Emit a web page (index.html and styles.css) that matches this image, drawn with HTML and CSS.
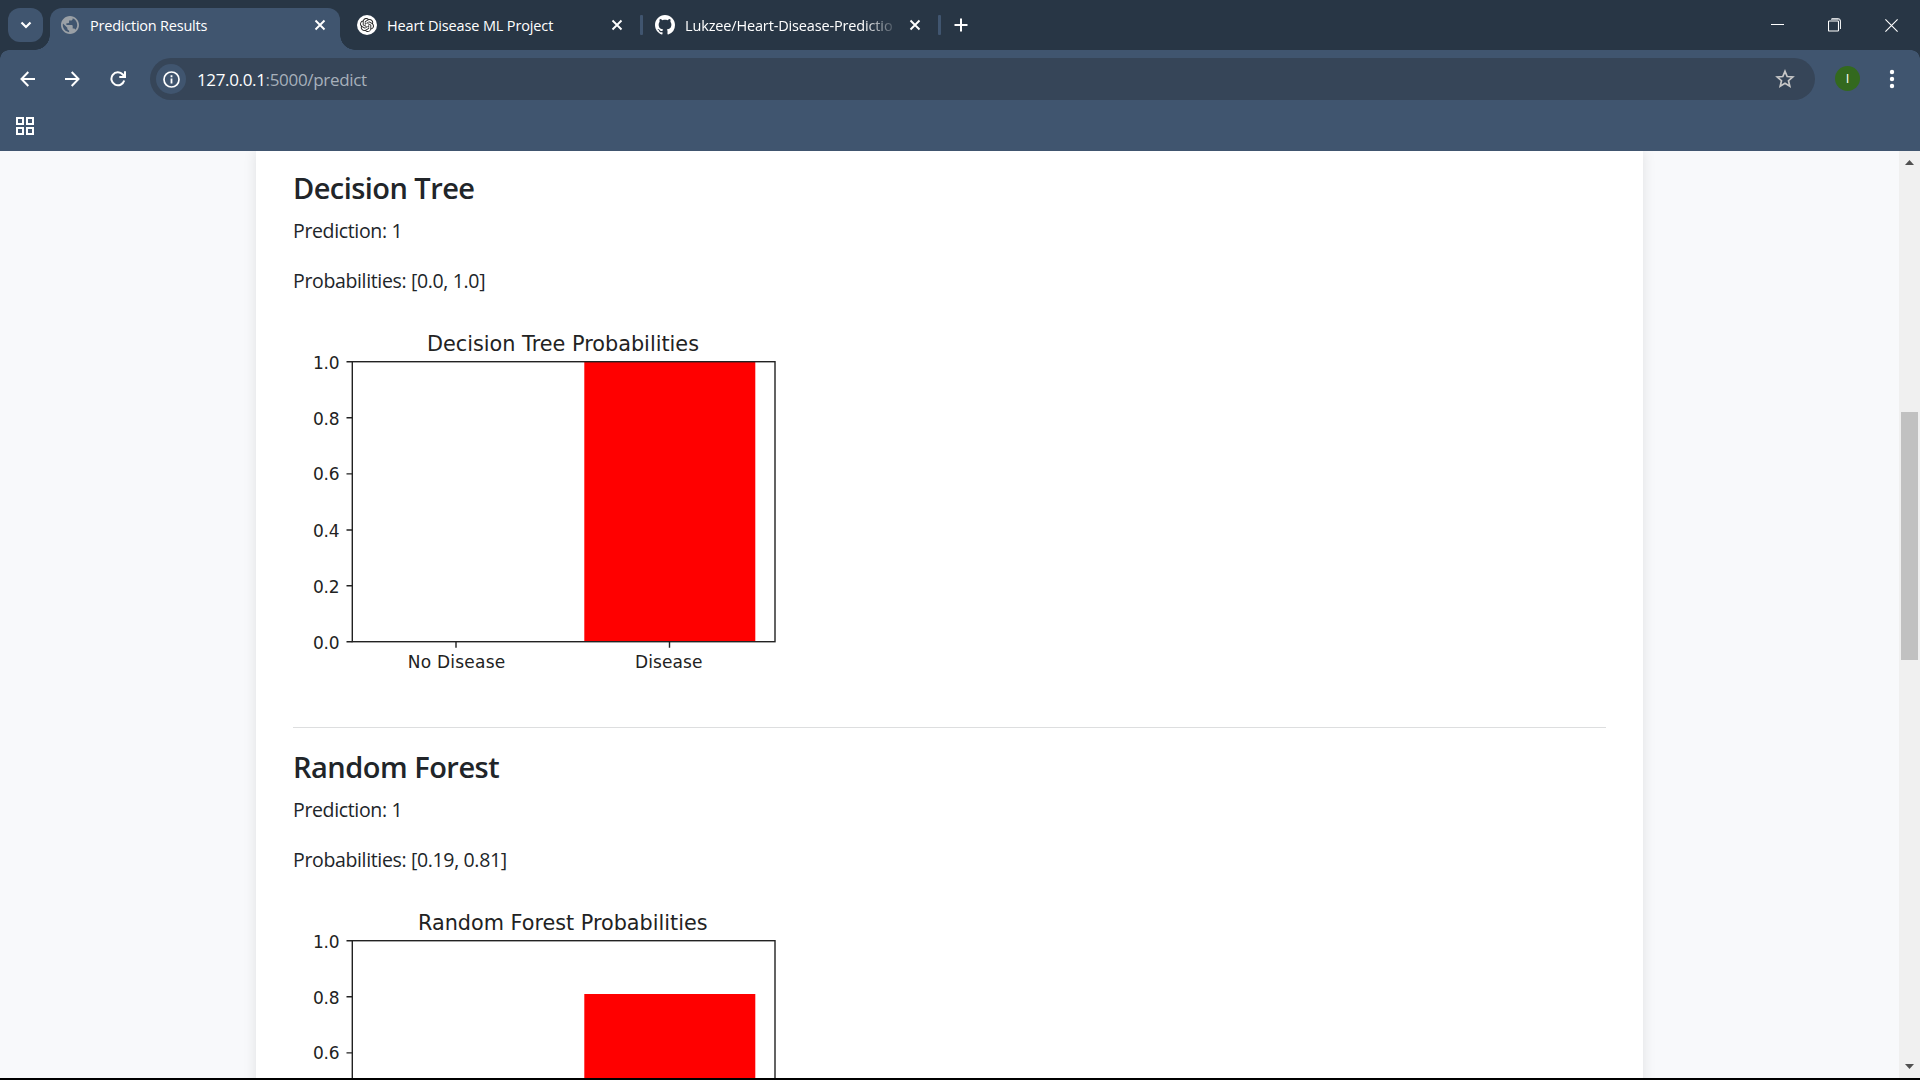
FILE: index.html
```html
<!DOCTYPE html>
<html lang="en">
<head>
<meta charset="utf-8">
<title>Prediction Results</title>
<link rel="stylesheet" href="styles.css">
</head>
<body>
<div class="window">
  <header class="tabstrip">
    <div class="tab-search"><svg width="12" height="8" viewBox="0 0 12 8"><path d="M1.500 1.500 6 6l4.500-4.500" fill="none" stroke="#fff" stroke-width="2.200"/></svg></div>
    <div class="tab active">
      <svg class="globe" viewBox="2 2 20 20"><path fill="#9aa0a6" d="M12 2C6.480 2 2 6.480 2 12s4.480 10 10 10 10-4.480 10-10S17.520 2 12 2zm-1 17.930c-3.950-.490-7-3.850-7-7.930 0-.620.080-1.210.210-1.790L9 15v1c0 1.100.900 2 2 2v1.930zm6.900-2.540c-.260-.810-1-1.390-1.900-1.390h-1v-3c0-.550-.450-1-1-1H8v-2h2c.550 0 1-.450 1-1V7h2c1.100 0 2-.900 2-2v-.410c2.930 1.190 5 4.060 5 7.410 0 2.080-.800 3.970-2.100 5.390z"/></svg>
      <span class="tab-title t1">Prediction Results</span>
      <svg class="close" viewBox="0 0 12 12"><path d="M1.500 1.500l9 9m0-9l-9 9"/></svg>
    </div>
    <div class="tab second">
      <svg class="favicon" viewBox="0 0 20 20"><circle cx="10" cy="10" r="10" fill="#fff"/><g transform="translate(3 3) scale(.583)"><path fill="#222" d="M22.2819 9.8211a5.9847 5.9847 0 0 0-.5157-4.9108 6.0462 6.0462 0 0 0-6.5098-2.9A6.0651 6.0651 0 0 0 4.9807 4.1818a5.9847 5.9847 0 0 0-3.9977 2.9 6.0462 6.0462 0 0 0 .7427 7.0966 5.98 5.98 0 0 0 .511 4.9107 6.051 6.051 0 0 0 6.5146 2.9001A5.9847 5.9847 0 0 0 13.2599 24a6.0557 6.0557 0 0 0 5.7718-4.2058 5.9894 5.9894 0 0 0 3.9977-2.9001 6.0557 6.0557 0 0 0-.7475-7.0729zm-9.022 12.6081a4.4755 4.4755 0 0 1-2.8764-1.0408l.1419-.0804 4.7783-2.7582a.7948.7948 0 0 0 .3927-.6813v-6.7369l2.02 1.1686a.071.071 0 0 1 .038.052v5.5826a4.504 4.504 0 0 1-4.4945 4.4944zm-9.6607-4.1254a4.4708 4.4708 0 0 1-.5346-3.0137l.142.0852 4.783 2.7582a.7712.7712 0 0 0 .7806 0l5.8428-3.3685v2.3324a.0804.0804 0 0 1-.0332.0615L9.74 19.9502a4.4992 4.4992 0 0 1-6.1408-1.6464zM2.3408 7.8956a4.485 4.485 0 0 1 2.3655-1.9728V11.6a.7664.7664 0 0 0 .3879.6765l5.8144 3.3543-2.0201 1.1685a.0757.0757 0 0 1-.071 0l-4.8303-2.7865A4.504 4.504 0 0 1 2.3408 7.872zm16.5963 3.8558L13.1038 8.364 15.1192 7.2a.0757.0757 0 0 1 .071 0l4.8303 2.7913a4.4944 4.4944 0 0 1-.6765 8.1042v-5.6772a.79.79 0 0 0-.407-.667zm2.0107-3.0231l-.142-.0852-4.7735-2.7818a.7759.7759 0 0 0-.7854 0L9.409 9.2297V6.8974a.0662.0662 0 0 1 .0284-.0615l4.8303-2.7866a4.4992 4.4992 0 0 1 6.6802 4.66zM8.3065 12.863l-2.02-1.1638a.0804.0804 0 0 1-.038-.0567V6.0742a4.4992 4.4992 0 0 1 7.3757-3.4537l-.142.0805L8.704 5.459a.7948.7948 0 0 0-.3927.6813zm1.0976-2.3654l2.602-1.4998 2.6069 1.4998v2.9994l-2.5974 1.4997-2.6067-1.4997Z"/></g></svg>
      <span class="tab-title t2">Heart Disease ML Project</span>
      <svg class="close" viewBox="0 0 12 12"><path d="M1.500 1.500l9 9m0-9l-9 9"/></svg>
    </div>
    <i class="separator"></i>
    <div class="tab third">
      <svg class="favicon" viewBox="0 0 16 16"><path fill="#fff" d="M8 0C3.58 0 0 3.58 0 8c0 3.54 2.29 6.53 5.47 7.59.4.07.55-.17.55-.38 0-.19-.01-.82-.01-1.49-2.01.37-2.53-.49-2.69-.94-.09-.23-.48-.94-.82-1.13-.28-.15-.68-.52-.01-.53.63-.01 1.08.58 1.23.82.72 1.21 1.87.87 2.33.66.07-.52.28-.87.51-1.07-1.78-.2-3.64-.89-3.64-3.95 0-.87.31-1.59.82-2.15-.08-.2-.36-1.02.08-2.12 0 0 .67-.21 2.2.82.64-.18 1.32-.27 2-.27s1.36.09 2 .27c1.53-1.04 2.2-.82 2.2-.82.44 1.1.16 1.92.08 2.12.51.56.82 1.27.82 2.15 0 3.07-1.87 3.75-3.65 3.95.29.25.54.73.54 1.48 0 1.07-.01 1.93-.01 2.2 0 .21.15.46.55.38A8.01 8.01 0 0 0 16 8c0-4.42-3.58-8-8-8z"/></svg>
      <span class="tab-title t3">Lukzee/Heart-Disease-Predictio</span>
      <svg class="close" viewBox="0 0 12 12"><path d="M1.500 1.500l9 9m0-9l-9 9"/></svg>
    </div>
    <i class="separator"></i>
    <svg class="new-tab" viewBox="0 0 14 14"><path d="M7 .5v13M.5 7h13" stroke="#fff" stroke-width="2"/></svg>
    <div class="controls">
      <svg width="13" height="14" viewBox="0 0 13 14"><path d="M0 6.500h13" stroke="#fff"/></svg>
      <svg width="13" height="14" viewBox="0 0 13 14"><path d="M3 1.500h7.500a2 2 0 0 1 2 2V11" fill="none" stroke="#a9b0b7"/><path d="M3.500.5H10a2.500 2.500 0 0 1 2.500 2.500v8" fill="none" stroke="#fff" stroke-width=".8"/><rect x=".5" y="3" width="10" height="10" rx=".8" fill="none" stroke="#fff" stroke-width="1.100"/></svg>
      <svg width="13" height="13" viewBox="0 0 13 13"><path d="M.4.4l12.200 12.200m0-12.200L.4 12.600" stroke="#fff" stroke-width="1.100"/></svg>
    </div>
  </header>

  <div class="toolbar">
    <div class="navrow">
      <svg class="nav back" viewBox="0 0 16 16"><path d="M15 8H2M8.300 1 1.500 8l6.800 7"/></svg>
      <svg class="nav forward" viewBox="0 0 16 16"><path d="M1 8h13M7.700 1l6.800 7-6.800 7"/></svg>
      <svg class="nav reload" viewBox="0 0 16 16"><path d="M14.200 9.500A6.500 6.500 0 1 1 12.800 3.500L14.500 5.600M15 .3v5.700H9.300"/></svg>
      <div class="omnibox">
        <span class="info"><svg width="17" height="17" viewBox="0 0 17 17"><circle cx="8.500" cy="8.500" r="7.500" fill="none" stroke="#fff" stroke-width="1.700"/><path d="M8.500 7.500v5M8.500 4.300v1.900" stroke="#fff" stroke-width="1.800"/></svg></span>
        <span class="url"><b>127.0.0.1</b>:5000/predict</span>
        <svg class="star" viewBox="0 0 20 20"><path d="M10 2.300l2.200 5.200 5.600.5-4.300 3.700 1.300 5.500L10 14.300l-4.800 2.900 1.300-5.500L2.200 8l5.600-.5z" fill="none" stroke="#c7c7c7" stroke-width="1.700"/></svg>
      </div>
      <span class="avatar">I</span>
      <svg class="menu" viewBox="0 0 6 20"><circle cx="3" cy="3" r="2.200"/><circle cx="3" cy="10" r="2.200"/><circle cx="3" cy="17" r="2.200"/></svg>
    </div>
    <div class="bookmarks">
      <svg width="18" height="18" viewBox="0 0 18 18"><path d="M1 1h6v6H1zM11 1h6v6h-6zM1 11h6v6H1zM11 11h6v6h-6z" fill="none" stroke="#fff" stroke-width="2"/></svg>
    </div>
  </div>

  <div class="viewport">
    <main class="card">
      <section class="model">
        <h4 class="h-tree">Decision Tree</h4>
        <p class="pred">Prediction: 1</p>
        <p class="prob">Probabilities: [0.0, 1.0]</p>
        <svg class="chart" viewBox="0 0 500 391">
          <rect x="291.300" y="45.700" width="171" height="280" fill="red"/>
          <g class="axis">
            <rect x="59.300" y="45.700" width="422.700" height="280"/>
            <path d="M53.500 45.700h6M53.500 101.700h6M53.500 157.900h6M53.500 214h6M53.500 269.700h6M53.500 325.700h6M163 325.700v6M376.500 325.700v6"/>
          </g>
          <text class="title" x="134" y="35.200" textLength="272" lengthAdjust="spacingAndGlyphs">Decision Tree Probabilities</text>
          <g class="ticks">
            <text x="20" y="52.700" textLength="26.500">1.0</text><text x="20" y="109" textLength="26.500">0.8</text><text x="20" y="164.300" textLength="26.500">0.6</text><text x="20" y="220.500" textLength="26.500">0.4</text><text x="20" y="276.500" textLength="26.500">0.2</text><text x="20" y="332.500" textLength="26.500">0.0</text>
            <text x="114.700" y="351.500" textLength="97.500">No Disease</text><text x="342" y="351.500" textLength="67.500">Disease</text>
          </g>
        </svg>
      </section>
      <hr>
      <section class="model">
        <h4 class="h-forest">Random Forest</h4>
        <p class="pred">Prediction: 1</p>
        <p class="prob prob2">Probabilities: [0.19, 0.81]</p>
        <svg class="chart" viewBox="0 0 500 391">
          <rect x="291.300" y="99" width="171" height="226.700" fill="red"/>
          <g class="axis">
            <rect x="59.300" y="45.700" width="422.700" height="280"/>
            <path d="M53.500 45.700h6M53.500 101.700h6M53.500 157.900h6M53.500 214h6M53.500 269.700h6M53.500 325.700h6M163 325.700v6M376.500 325.700v6"/>
          </g>
          <text class="title" x="125" y="35.200" textLength="289.500" lengthAdjust="spacingAndGlyphs">Random Forest Probabilities</text>
          <g class="ticks">
            <text x="20" y="52.700" textLength="26.500">1.0</text><text x="20" y="109" textLength="26.500">0.8</text><text x="20" y="164.300" textLength="26.500">0.6</text>
          </g>
        </svg>
      </section>
    </main>
    <aside class="scrollbar">
      <svg width="9" height="5" viewBox="0 0 9 5"><path d="M0 5 4.500 0 9 5z" fill="#505050"/></svg>
      <div class="thumb"></div>
      <svg class="down" width="9" height="5" viewBox="0 0 9 5"><path d="M0 0h9L4.500 5z" fill="#505050"/></svg>
    </aside>
  </div>
</div>
</body>
</html>
```
FILE: styles.css
```css
* { box-sizing: border-box; }
body { margin: 0; background: #000; font-family: "Open Sans", "Noto Sans", sans-serif; overflow: hidden; }
svg { display: block; flex: none; }
.window { width: 1920px; height: 1080px; display: flex; flex-direction: column; background: #000; padding-bottom: 2px; }

.tabstrip { height: 50px; flex: none; display: flex; align-items: center; background: #283645; padding-left: 8px; color: #fff; }
.tab-search { width: 35px; height: 34px; border-radius: 12px; background: #40556f; display: flex; align-items: center; justify-content: center; margin-right: 7px; padding-left: 1px; }
.tab { display: flex; align-items: center; height: 42px; }
.active { position: relative; width: 290px; margin-top: 8px; padding: 0 14px 8px 11px; background: #40556f; border-radius: 12px 12px 0 0; }
.active::before, .active::after { content: ""; position: absolute; bottom: 0; width: 15px; height: 15px; }
.active::before { left: -15px; background: radial-gradient(circle at 0 0, transparent 14.500px, #40556f 15px); }
.active::after { right: -15px; background: radial-gradient(circle at 100% 0, transparent 14.500px, #40556f 15px); }
.globe { width: 18px; height: 18px; margin-right: 11px; }
.favicon { width: 20px; height: 20px; margin-right: 10px; }
.second { width: 283px; margin-left: 17px; padding-right: 17px; }
.third { width: 283px; margin-left: 12px; }
.tab-title { flex: 1; white-space: nowrap; overflow: hidden; font-size: 14.500px; line-height: 22px; padding-top: 1px; letter-spacing: -.2px; }
.t1 { letter-spacing: -.22px; }
.t2 { letter-spacing: -.14px; }
.t3 { letter-spacing: -.15px; }
.third .tab-title { flex: 0 0 210px; margin-right: 14px; -webkit-mask-image: linear-gradient(90deg, #000 178px, transparent 214px); mask-image: linear-gradient(90deg, #000 178px, transparent 214px); }
.close { width: 12px; height: 12px; }
.close path { stroke: #fff; stroke-width: 1.900; }
.separator { width: 3px; height: 20px; border-radius: 1px; background: #40556f; flex: none; }
.new-tab { width: 14px; height: 14px; margin-left: 13px; }
.controls { margin-left: auto; width: 127px; margin-right: 22px; display: flex; justify-content: space-between; align-items: center; }

.toolbar { flex: none; height: 101px; background: #40556f; position: relative; }
.toolbar::after { content: ""; position: absolute; inset: 0 0 auto 0; height: 9px; background: radial-gradient(circle at 9px 9px, transparent 8.500px, #283645 9px) 0 0 / 9px 9px no-repeat, radial-gradient(circle at 0 9px, transparent 8.500px, #283645 9px) 100% 0 / 9px 9px no-repeat; }
.navrow { height: 58px; display: flex; align-items: center; padding-left: 20px; }
.nav { width: 16px; height: 16px; margin-right: 28px; margin-top: -1px; }
.nav path { fill: none; stroke: #fff; stroke-width: 2; }
.reload { margin-right: 24px; margin-left: 2px; }
.omnibox { width: 1665px; height: 42px; border-radius: 21px; background: #364558; display: flex; align-items: center; padding: 0 20px 0 6px; }
.info { width: 30px; height: 30px; border-radius: 50%; background: #40556f; display: flex; align-items: center; justify-content: center; }
.url { flex: 1; margin-left: 11px; padding-top: 1px; font-size: 17px; color: #a7b0bb; line-height: 26px; letter-spacing: -.32px; }
.url b { font-weight: 400; color: #fff; letter-spacing: -.35px; }
.star { width: 20px; height: 20px; }
.avatar { width: 25px; height: 25px; border-radius: 50%; background: #33691e; color: #fff; font: 13px/25px "Open Sans", sans-serif; text-align: center; margin: -1px 0 0 20px; }
.menu { width: 6px; height: 20px; margin: -1px 0 0 29px; fill: #fff; }
.bookmarks { height: 43px; padding: 8.500px 0 0 15.500px; }

.viewport { flex: 1; min-height: 0; display: flex; overflow: hidden; background: #f8f9fb; padding-left: 256px; }
.card { width: 1387px; padding: 19px 37px 0; background: #fff; box-shadow: 0 0 12.500px rgba(0, 0, 0, .1); color: #212529; height: 1200px; flex: none; }
h4 { margin: 0 0 10px; font-size: 29px; line-height: 36px; font-weight: 600; white-space: nowrap; letter-spacing: -.55px; }
.h-forest { letter-spacing: -.5px; }
p { margin: 0 0 20px; font-size: 19.500px; line-height: 30px; letter-spacing: -.35px; }
.chart { width: 500px; height: 391px; font-family: "DejaVu Sans", sans-serif; }
.axis { fill: none; stroke: #222; stroke-width: 1.400; }
.chart text { fill: #222; }
.title { font-size: 21px; }
.ticks { font-size: 17px; }
hr { border: 0; height: 1px; margin: 20px 0 21px; background: #dddedf; }
.scrollbar { margin-left: auto; width: 21px; background: #f0f0f0; display: flex; flex-direction: column; align-items: center; padding: 9px 0; }
.thumb { width: 17px; height: 248px; margin-top: 247px; background: #c1c1c1; }
.down { margin-top: auto; }
```
